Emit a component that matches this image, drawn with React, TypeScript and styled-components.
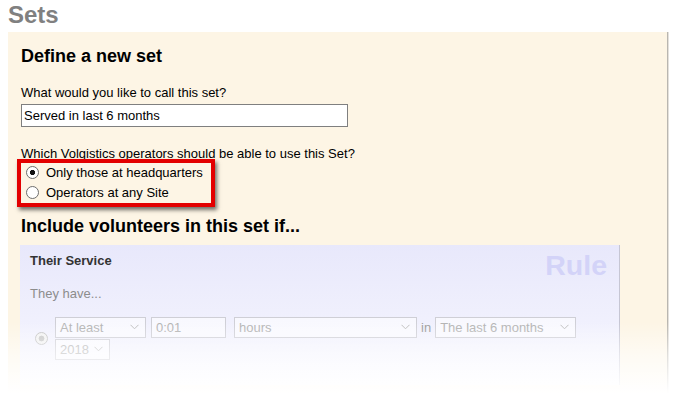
import React from "react";
import styled, { createGlobalStyle } from "styled-components";

const GlobalStyle = createGlobalStyle`
  html, body {
    margin: 0;
    padding: 0;
    background: #fff;
    overflow: hidden;
  }
  body {
    font-family: "Liberation Sans", Arial, sans-serif;
    font-size: 13px;
    color: #000;
  }
`;

const Chevron = () => (
  <svg width="9" height="6" viewBox="0 0 9 6">
    <polyline points="0.5,0.8 4.5,4.8 8.5,0.8" fill="none" stroke="#bdbdbd" strokeWidth="1" />
  </svg>
);

const App = () => {
  return (
    <>
      <GlobalStyle />
      <Page>
        <PageTitle>Sets</PageTitle>
        <Panel>
          <SectionTitle>Define a new set</SectionTitle>
          <FieldLabel $top={18.5}>What would you like to call this set?</FieldLabel>
          <TextInput defaultValue="Served in last 6 months" />
          <FieldLabel $top={18.5}>Which Volgistics operators should be able to use this Set?</FieldLabel>
          <RadioGroup>
            <RadioRow>
              <Radio type="radio" name="ops" defaultChecked />
              Only those at headquarters
            </RadioRow>
            <RadioRow>
              <Radio type="radio" name="ops" />
              Operators at any Site
            </RadioRow>
            <Highlight />
          </RadioGroup>
          <SectionTitle $top={13.6}>Include volunteers in this set if...</SectionTitle>
          <RuleBox>
            <RuleHeader>
              <RuleTitle>Their Service</RuleTitle>
              <RuleTag>Rule</RuleTag>
            </RuleHeader>
            <RuleText>They have...</RuleText>
            <ControlRow>
              <DisabledRadio />
              <Controls>
                <SelectBox $width={91} $gap={5}>
                  At least
                  <Chevron />
                </SelectBox>
                <SelectBox $width={75} $gap={8}>
                  0:01
                </SelectBox>
                <SelectBox $width={183} $gap={4}>
                  hours
                  <Chevron />
                </SelectBox>
                <InWord>in</InWord>
                <SelectBox $width={141}>
                  The last 6 months
                  <Chevron />
                </SelectBox>
                <SelectBox $width={55}>
                  2018
                  <Chevron />
                </SelectBox>
              </Controls>
            </ControlRow>
          </RuleBox>
        </Panel>
        <Fade />
      </Page>
    </>
  );
};
export default App;

const Page = styled.div`
  position: relative;
  height: 403px;
  padding-left: 8px;
  display: flex;
  flex-direction: column;
  box-sizing: border-box;
`;
const PageTitle = styled.h1`
  margin: 1px 0 3px;
  font-size: 24px;
  line-height: 28px;
  font-weight: bold;
  color: #808080;
`;
const Panel = styled.div`
  flex: 1;
  width: 660px;
  box-sizing: border-box;
  padding: 13.5px 0 0 13px;
  background: #fdf5e5;
  border-right: 1px solid #b9b6b0;
  box-shadow: 1px 0 0 #e4e1dc;
`;
const SectionTitle = styled.h2<{ $top?: number }>`
  margin: ${(p) => p.$top ?? 0}px 0 0;
  font-size: 18px;
  line-height: 21px;
  font-weight: bold;
  color: #000;
`;
const FieldLabel = styled.div<{ $top?: number }>`
  margin-top: ${(p) => p.$top ?? 0}px;
  line-height: 15px;
  font-size: 13px;
`;
const TextInput = styled.input`
  display: block;
  margin-top: 4px;
  width: 327px;
  height: 23px;
  box-sizing: border-box;
  border: 1px solid #7f7f7f;
  padding: 0 2px;
  font-family: "Liberation Sans", Arial, sans-serif;
  font-size: 13px;
  color: #000;
  background: #fff;
  outline: none;
`;
const RadioGroup = styled.div`
  position: relative;
  margin-top: 1.5px;
  width: 190px;
`;
const RadioRow = styled.label`
  display: flex;
  align-items: center;
  height: 20px;
  line-height: 15px;
  font-size: 13px;
`;
const Radio = styled.input`
  appearance: none;
  margin: 0 7px 0 5px;
  width: 13px;
  height: 13px;
  box-sizing: border-box;
  border-radius: 50%;
  border: 1px solid #6e6e6e;
  background: #fff;
  &:checked {
    background: radial-gradient(circle, #111 0 2.4px, #fff 2.9px);
  }
`;
const Highlight = styled.div`
  position: absolute;
  top: -3px;
  left: -4px;
  width: 198px;
  height: 48px;
  box-sizing: border-box;
  border: 4px solid #e30000;
  box-shadow: 2px 3px 4px rgba(0, 0, 0, 0.55);
  pointer-events: none;
`;
const RuleBox = styled.div`
  margin: 8.4px 0 0 -1px;
  width: 600px;
  height: 140px;
  box-sizing: border-box;
  padding: 7.6px 12px 0 10px;
  background: linear-gradient(#e8e8fb, #f7f7ff);
  border-right: 1px solid #c6c6d4;
`;
const RuleHeader = styled.div`
  display: flex;
  justify-content: space-between;
  align-items: flex-start;
`;
const RuleTitle = styled.div`
  font-size: 13px;
  line-height: 15px;
  font-weight: bold;
  color: #333;
`;
const RuleTag = styled.div`
  margin-top: -1.3px;
  font-size: 28.5px;
  line-height: 28.5px;
  font-weight: bold;
  color: #d3d3f8;
`;
const RuleText = styled.div`
  margin-top: 6.5px;
  font-size: 13px;
  line-height: 15px;
  color: #8c8c8c;
`;
const ControlRow = styled.div`
  display: flex;
  align-items: center;
  margin-top: 15.4px;
`;
const DisabledRadio = styled.span`
  margin: 0 7px 0 5px;
  width: 13px;
  height: 13px;
  box-sizing: border-box;
  border-radius: 50%;
  border: 1px solid #c2c2c2;
  background: radial-gradient(circle, #c6c6c6 0 2.6px, #f2f2f2 3.2px);
`;
const Controls = styled.div`
  display: flex;
  flex-wrap: wrap;
  align-items: center;
  row-gap: 1px;
  width: 525px;
`;
const SelectBox = styled.div<{ $width: number; $gap?: number }>`
  display: flex;
  align-items: center;
  justify-content: space-between;
  width: ${(p) => p.$width}px;
  height: 21px;
  margin-right: ${(p) => p.$gap ?? 0}px;
  box-sizing: border-box;
  padding: 0 6px 0 4px;
  border: 1px solid #cfcfd6;
  background: rgba(255, 255, 255, 0.55);
  font-size: 13px;
  color: #b3b3b3;
`;
const InWord = styled.span`
  margin-right: 4px;
  font-size: 13px;
  color: #9a9a9a;
`;
const Fade = styled.div`
  position: absolute;
  left: 0;
  right: 0;
  top: 322px;
  bottom: 0;
  background: linear-gradient(
    to bottom,
    rgba(255, 255, 255, 0) 0%,
    rgba(255, 255, 255, 0.55) 40%,
    #fff 88%
  );
  pointer-events: none;
`;
